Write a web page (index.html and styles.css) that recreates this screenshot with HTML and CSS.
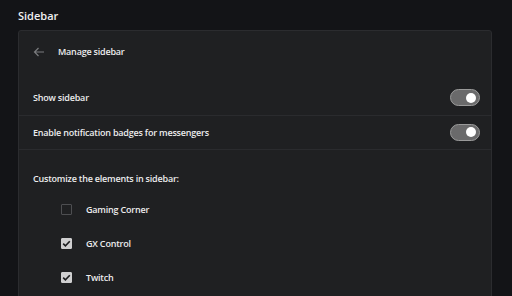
FILE: index.html
```html
<!DOCTYPE html>
<html>
<head>
<meta charset="utf-8">
<link rel="stylesheet" href="styles.css">
</head>
<body>
<div class="page">
  <h1 class="title">Sidebar</h1>
  <div class="card">
    <div class="header">
      <svg class="back" width="12" height="10" viewBox="0 0 12 10"><path d="M11 5H1.5M5.5 1L1.5 5l4 4" fill="none" stroke="#7a7b7e" stroke-width="1.2"/></svg>
      <span class="header-text">Manage sidebar</span>
    </div>
    <div class="row">
      <span>Show sidebar</span>
      <span class="toggle"><span class="knob"></span></span>
    </div>
    <div class="row">
      <span>Enable notification badges for messengers</span>
      <span class="toggle"><span class="knob"></span></span>
    </div>
    <div class="section">
      <div class="section-label">Customize the elements in sidebar:</div>
      <div class="item">
        <span class="box"></span>
        <span>Gaming Corner</span>
      </div>
      <div class="item">
        <span class="box checked"><svg width="11" height="11" viewBox="0 0 11 11"><path d="M2.2 5.6l2.2 2.2 4.4-4.6" fill="none" stroke="#1b1c1e" stroke-width="1.6"/></svg></span>
        <span>GX Control</span>
      </div>
      <div class="item">
        <span class="box checked"><svg width="11" height="11" viewBox="0 0 11 11"><path d="M2.2 5.6l2.2 2.2 4.4-4.6" fill="none" stroke="#1b1c1e" stroke-width="1.6"/></svg></span>
        <span>Twitch</span>
      </div>
    </div>
  </div>
</div>
</body>
</html>
```
FILE: styles.css
```css
html, body {
  margin: 0;
  padding: 0;
  background: #131417;
  color: #ececed;
  font-family: "Open Sans", "Noto Sans", sans-serif;
  overflow: hidden;
}
.page {
  padding: 0 20px 0 18px;
  height: 296px;
}
.title {
  margin: 0;
  height: 30px;
  display: flex;
  align-items: center;
  font-size: 11px;
  font-weight: 600;
  color: #f0f0f0;
}
.card {
  background: #1f2022;
  border: 1px solid #2b2c2f;
  border-radius: 3px;
  height: 300px;
  letter-spacing: -0.2px;
}
.header {
  height: 41px;
  display: flex;
  align-items: center;
  padding-left: 14px;
  font-size: 9px;
  font-weight: 600;
  margin-bottom: 9px;
}
.back {
  margin-right: 13px;
}
.row {
  height: 33.5px;
  display: flex;
  align-items: center;
  justify-content: space-between;
  padding: 0 11px 0 14px;
  border-bottom: 1px solid #2a2b2e;
  font-size: 9px;
  font-weight: 600;
}
.toggle {
  height: 15px;
  width: 25px;
  border: 1px solid #9a9a9a;
  border-radius: 9px;
  background: #6a6a6b;
  display: flex;
  align-items: center;
  justify-content: flex-end;
  padding-right: 3px;
}
.knob {
  width: 10px;
  height: 10px;
  border-radius: 50%;
  background: #ffffff;
}
.section {
  padding: 14px 0 0 14px;
  font-size: 9px;
  font-weight: 600;
}
.section-label {
  height: 28px;
  display: flex;
  align-items: center;
}
.item {
  height: 34px;
  display: flex;
  align-items: center;
  padding-left: 28px;
}
.box {
  width: 9px;
  height: 9px;
  border: 1px solid #4d4e51;
  border-radius: 1px;
  margin-right: 14px;
  display: flex;
  align-items: center;
  justify-content: center;
}
.box.checked {
  background: #cfcfd0;
  border-color: #cfcfd0;
}
.box svg {
  flex: none;
}
```
